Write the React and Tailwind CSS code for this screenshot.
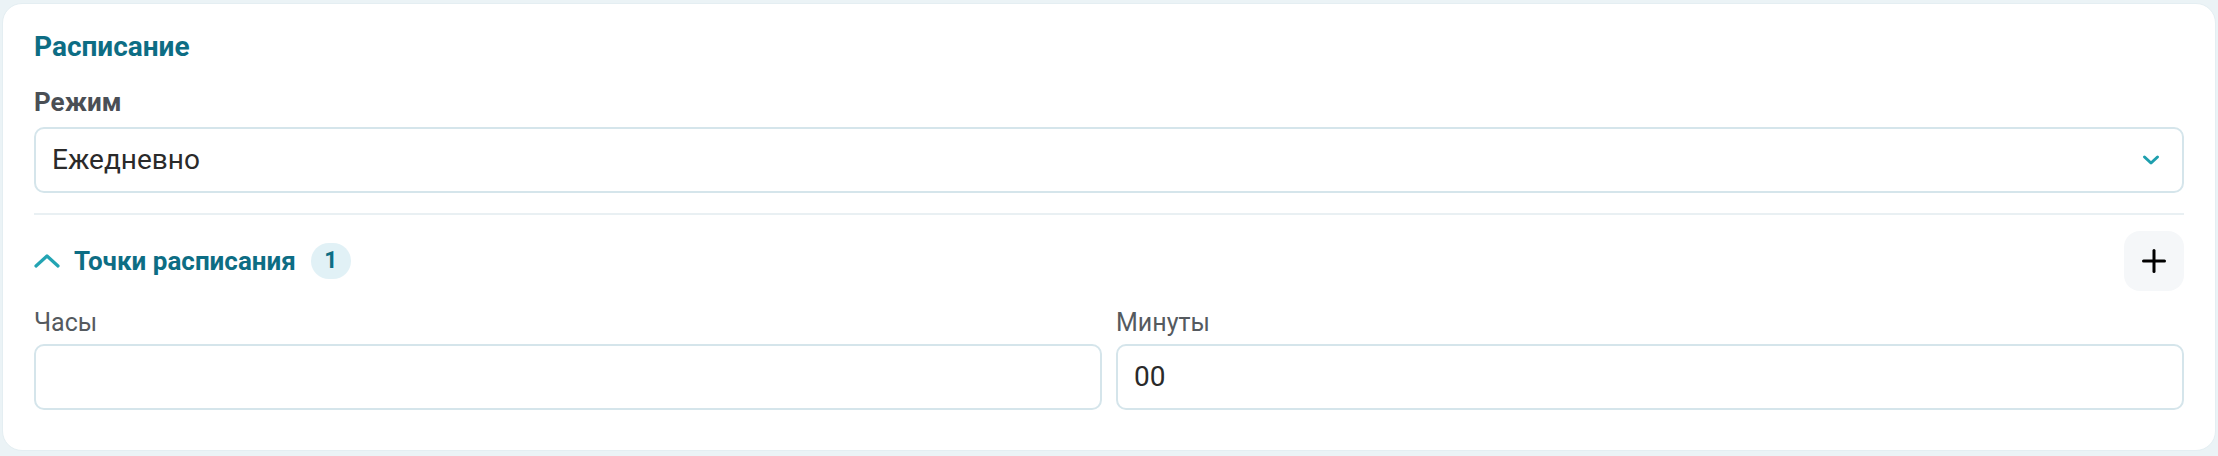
import { Plus } from 'lucide-react'

const Field = ({ label, value }) => (
  <div className="flex flex-col">
    <span className="text-[25px] leading-[30px] text-[#555a5f] mb-[6px]">{label}</span>
    <div className="h-[66px] rounded-[10px] border-2 border-[#d5e5eb] bg-white pl-4 flex items-center text-[28px] text-[#2a2a2a]">
      {value}
    </div>
  </div>
)

const App = () => {
  return (
    <div
      className="w-[2218px] h-[456px] bg-[#ebf3f6] px-[2px] pt-[3px]"
      style={{ fontFamily: 'Roboto, "Noto Sans", sans-serif' }}
    >
      <div className="h-[448px] rounded-[20px] bg-white border border-[#e4eef2] px-[31px] pt-[26px] flex flex-col">
        <h2 className="text-[28px] leading-[34px] font-bold text-[#0d6d84]">Расписание</h2>

        <label className="mt-[22px] text-[26px] leading-[32px] font-bold text-[#4a4f55]">Режим</label>
        <div className="mt-[9px] h-[66px] rounded-[10px] border-2 border-[#d5e5eb] bg-white pl-4 pr-[22px] flex items-center justify-between text-[28px] text-[#2a2a2a]">
          <span>Ежедневно</span>
          <svg width="18" height="12" viewBox="0 0 18 12" fill="none" stroke="#1e9fae" strokeWidth="3" strokeLinecap="round" strokeLinejoin="round">
            <polyline points="2.5,3 9,9 15.5,3" />
          </svg>
        </div>

        <div className="mt-[20px] h-[2px] bg-[#e9f0f3]" />

        <div className="mt-[16px] h-[60px] flex items-center justify-between">
          <div className="flex items-center">
            <svg width="26" height="16" viewBox="0 0 26 16" fill="none" stroke="#23a4b3" strokeWidth="3.2" strokeLinecap="round" strokeLinejoin="round">
              <polyline points="2,13 13,3 24,13" />
            </svg>
            <span className="ml-[14px] text-[26px] font-bold text-[#0d6d84]">Точки расписания</span>
            <span className="ml-[15px] w-[40px] h-[36px] rounded-full bg-[#e1f1f6] flex items-center justify-center text-[23px] font-bold text-[#0d6d84]">
              1
            </span>
          </div>
          <button className="w-[60px] h-[60px] rounded-[16px] bg-[#f5f7f9] flex items-center justify-center text-black">
            <Plus size={36} strokeWidth={2} />
          </button>
        </div>

        <div className="mt-[17px] grid grid-cols-2 gap-[14px]">
          <Field label="Часы" value="" />
          <Field label="Минуты" value="00" />
        </div>
      </div>
    </div>
  )
}

export default App
